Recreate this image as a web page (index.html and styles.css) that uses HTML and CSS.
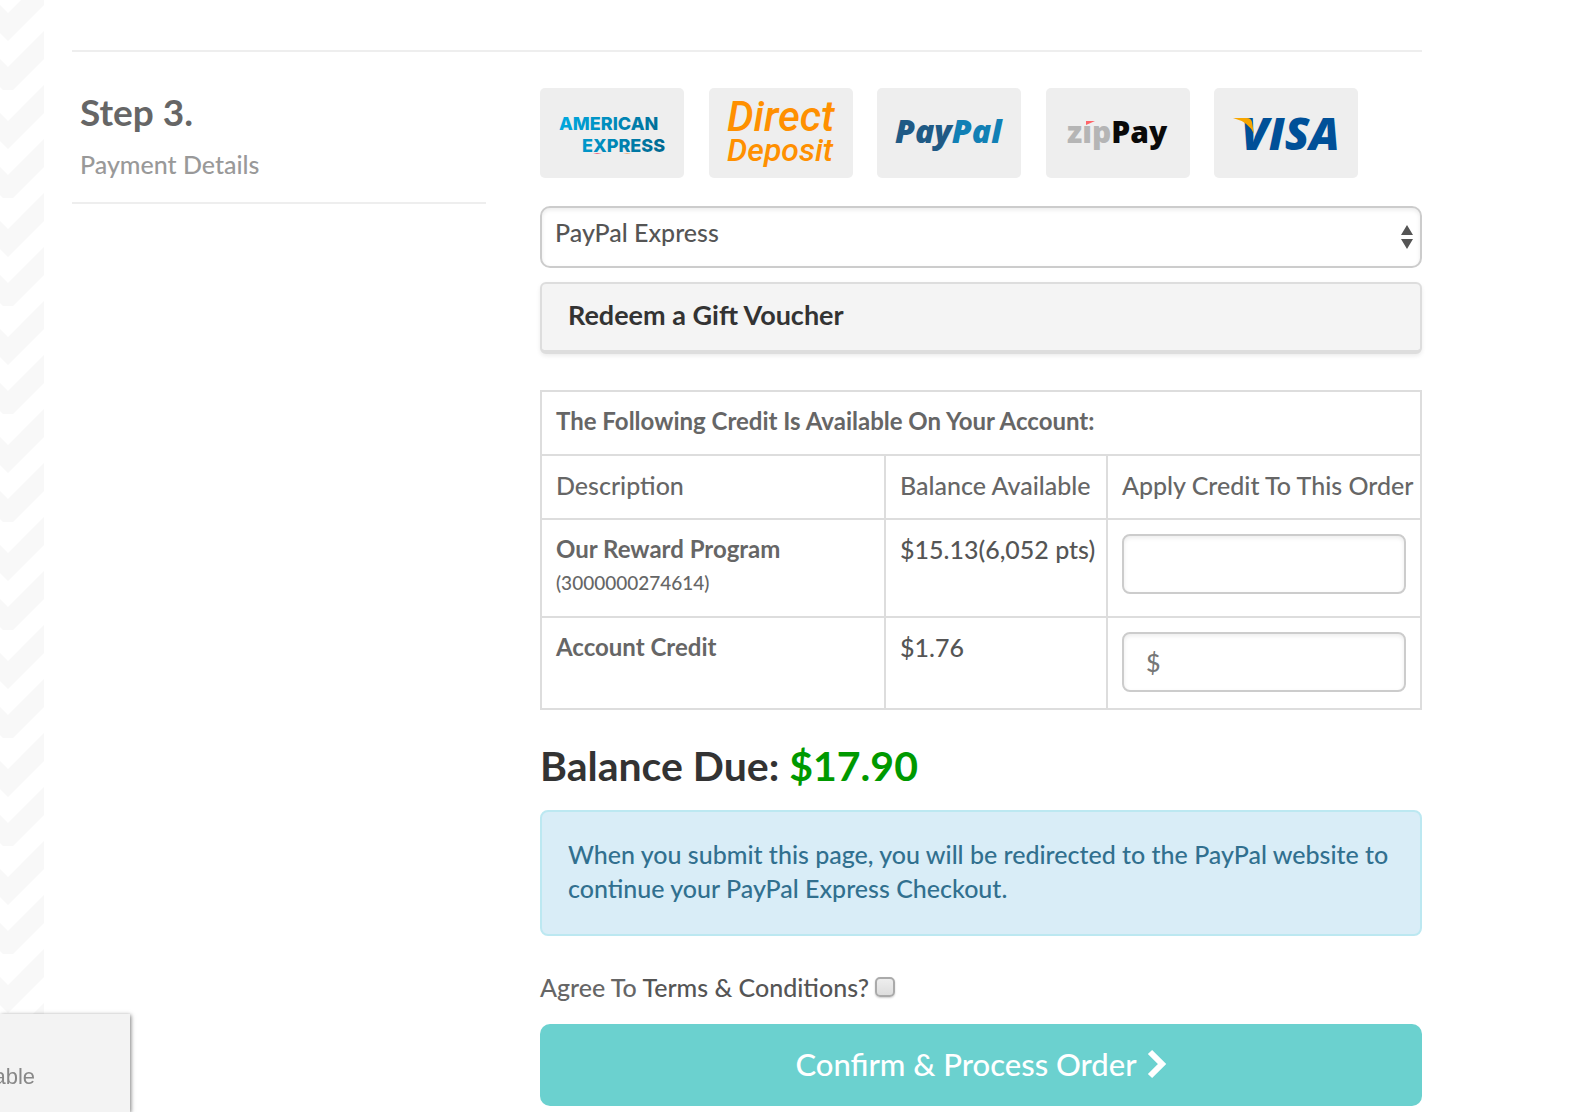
FILE: index.html
```html
<!DOCTYPE html>
<html lang="en">
<head>
	<meta charset="utf-8">
	<title>Checkout - Payment Details</title>
	<link rel="stylesheet" href="styles.css">
</head>
<body>
	<svg class="side-pattern" aria-hidden="true">
		<defs>
			<pattern id="chevrons" width="44" height="108" patternUnits="userSpaceOnUse">
				<path d="M0 5L8 13L44 -23V5L8 41L0 33Z"/>
				<path d="M0 59L8 67L44 31V59L13 90H3L0 87Z"/>
				<path d="M0 113L8 121L44 85V113L8 149L0 141Z"/>
			</pattern>
		</defs>
		<rect width="44" height="100%" fill="url(#chevrons)"/>
	</svg>

	<main class="checkout">
		<section class="step">
			<header class="step-header">
				<h2 class="step-title">Step 3.</h2>
				<p class="step-text">Payment Details</p>
			</header>

			<form class="payment" onsubmit="return false">
				<ul class="cards">
					<li class="card">
						<svg class="card-logo" viewBox="0 0 144 90">
							<defs>
								<linearGradient id="amex" gradientUnits="userSpaceOnUse" x1="20" y1="30" x2="125" y2="60">
									<stop offset="0" stop-color="#00a9e0"/>
									<stop offset="1" stop-color="#006890"/>
								</linearGradient>
							</defs>
							<text class="amex" x="19" y="42">AMERICAN</text>
							<text class="amex" x="42" y="64">EXPRESS</text>
							<path d="M53 65H62L57 66Z" fill="#e8607a"/>
							<path d="M83 65H92L87 66Z" fill="#f0b080"/>
						</svg>
					</li>
					<li class="card">
						<svg class="card-logo" viewBox="0 0 144 90">
							<text class="deposit deposit-big" x="18" y="43">Direct</text>
							<text class="deposit" x="18" y="73">Deposit</text>
						</svg>
					</li>
					<li class="card">
						<svg class="card-logo" viewBox="0 0 144 90">
							<text class="paypal" x="18" y="55">Pay<tspan class="paypal-light">Pal</tspan></text>
						</svg>
					</li>
					<li class="card">
						<svg class="card-logo" viewBox="0 0 144 90">
							<text class="zip" x="21" y="55">zıp<tspan class="zip-dark">Pay</tspan></text>
							<path d="M40 33H49L40 37Z" fill="#ff6468"/>
						</svg>
					</li>
					<li class="card">
						<svg class="card-logo" viewBox="0 0 144 90">
							<text class="visa" x="27" y="62">VISA</text>
							<path d="M19 30H33Q37 30 38 34L40 46Q35 34 19 30Z" fill="#f7a600"/>
						</svg>
					</li>
				</ul>

				<div class="select-wrap">
					<select class="method" aria-label="Payment method">
						<option>PayPal Express</option>
						<option>Direct Deposit</option>
						<option>zipPay</option>
					</select>
					<svg class="select-arrows" viewBox="0 0 12 24" aria-hidden="true">
						<path d="M0 10L6 0L12 10ZM0 14H12L6 24Z"/>
					</svg>
				</div>

				<button type="button" class="voucher">Redeem a Gift Voucher</button>

				<table class="credit">
					<colgroup>
						<col>
						<col class="col-balance">
						<col class="col-apply">
					</colgroup>
					<tr>
						<th colspan="3">The Following Credit Is Available On Your Account:</th>
					</tr>
					<tr>
						<td>Description</td>
						<td>Balance Available</td>
						<td>Apply Credit To This Order</td>
					</tr>
					<tr>
						<td><label for="reward"><b>Our Reward Program</b> <small>(3000000274614)</small></label></td>
						<td class="amount">$15.13(6,052 pts)</td>
						<td><input class="credit-input" type="text" id="reward"></td>
					</tr>
					<tr>
						<td><label for="account"><b>Account Credit</b></label></td>
						<td class="amount">$1.76</td>
						<td><input class="credit-input" type="text" id="account" placeholder="$"></td>
					</tr>
				</table>

				<h1 class="balance">Balance Due: <span class="balance-amount">$17.90</span></h1>

				<div class="alert">When you submit this page, you will be redirected to the PayPal website to continue your PayPal Express Checkout.</div>

				<div class="terms">
					<label for="terms">Agree To <a class="terms-link" href="#">Terms &amp; Conditions?</a></label>
					<input class="terms-check" type="checkbox" id="terms">
				</div>

				<button class="confirm">
					Confirm &amp; Process Order
					<svg class="confirm-icon" viewBox="0 0 20 30" aria-hidden="true">
						<path d="M3 3L15 15L3 27" fill="none" stroke="#fff" stroke-width="6"/>
					</svg>
				</button>
			</form>
		</section>
	</main>

	<div class="chat">able</div>
</body>
</html>
```
FILE: styles.css
```css
* {
	box-sizing: border-box;
}

body {
	display: flex;
	min-height: 100vh;
	margin: 0;
	font-family: Lato, sans-serif;
	font-size: 25px;
	font-weight: 500;
	line-height: 34px;
	color: #666;
	background-color: #fff;
}

.side-pattern {
	flex: none;
	align-self: stretch;
	width: 44px;
	height: auto;
	fill: #f8f8f8;
}

.checkout {
	flex: 1;
	padding: 50px 174px 0 28px;
}

.step {
	display: grid;
	grid-template-columns: 23fr 49fr;
	column-gap: 54px;
	align-items: start;
	padding-top: 36px;
	border-top: 2px solid #eee;
}

.step-header {
	padding: 0 8px 21px;
	border-bottom: 2px solid #eee;
}

.step-title {
	margin: 0 0 11px;
	font-size: 37px;
	line-height: 48px;
}

.step-text {
	margin: 0;
	color: #999;
}

/* payment logos */

.cards {
	display: flex;
	justify-content: space-between;
	max-width: 818px;
	margin: 0 0 28px;
	padding: 0;
	list-style: none;
}

.card {
	width: 144px;
	height: 90px;
	background-color: #eee;
	border-radius: 5px;
}

.card-logo {
	display: block;
	width: 100%;
	height: 100%;
}

.amex {
	font: 800 18px Inter, sans-serif;
	fill: url(#amex);
}

.deposit {
	font: italic 500 32px Roboto, sans-serif;
	fill: #ff9000;
}

.deposit-big {
	font-size: 42px;
}

.paypal {
	font: italic 800 32px "Open Sans", sans-serif;
	fill: #1f5a85;
}

.paypal-light {
	fill: #1180b5;
}

.zip {
	font: 800 30px "Open Sans", sans-serif;
	fill: #b5b5b5;
}

.zip-dark {
	fill: #0a0a0a;
}

.visa {
	font: italic 800 45px "Open Sans", sans-serif;
	fill: #005098;
}

/* form */

.select-wrap {
	position: relative;
	margin-bottom: 14px;
}

.method {
	display: block;
	width: 100%;
	height: 62px;
	padding: 0 40px 10px 13px;
	font: inherit;
	color: #555;
	background-color: #fff;
	border: 2px solid #ccc;
	border-radius: 10px;
	box-shadow: inset 0 2px 4px rgba(0, 0, 0, 0.08);
	appearance: none;
}

.select-arrows {
	position: absolute;
	top: 19px;
	right: 9px;
	width: 12px;
	height: 24px;
	fill: #555;
	pointer-events: none;
}

.voucher {
	display: block;
	width: 100%;
	margin-bottom: 36px;
	padding: 14px 26px 18px;
	font: inherit;
	font-size: 27px;
	font-weight: bold;
	text-align: left;
	color: #333;
	background-color: #f4f4f4;
	border: 2px solid #ddd;
	border-bottom-width: 4px;
	border-radius: 6px;
	box-shadow: 0 2px 4px rgba(0, 0, 0, 0.08);
	cursor: pointer;
}

.credit {
	width: 100%;
	margin-bottom: 29px;
	table-layout: fixed;
	border-collapse: collapse;
}

.col-balance {
	width: 222px;
}

.col-apply {
	width: 314px;
}

.credit th,
.credit td {
	padding: 12px 14px 16px;
	text-align: left;
	vertical-align: top;
	white-space: nowrap;
	border: 2px solid #ddd;
}

.credit th,
.credit b {
	font-size: 24px;
}

.credit b,
.credit small {
	display: block;
}

.credit small {
	font-size: 19px;
}

.amount {
	color: #555;
}

.credit-input {
	display: block;
	width: 100%;
	height: 60px;
	margin-top: 2px;
	padding: 0 22px;
	font: inherit;
	color: #555;
	background-color: #fff;
	border: 2px solid #ccc;
	border-radius: 8px;
	box-shadow: inset 0 2px 4px rgba(0, 0, 0, 0.08);
}

.credit-input::placeholder {
	color: #777;
}

.balance {
	margin: 0 0 17px;
	font-size: 41px;
	line-height: 54px;
	color: #333;
}

.balance-amount {
	color: #090;
}

.alert {
	margin-bottom: 34px;
	padding: 25px 26px 29px;
	color: #31708f;
	background-color: #d9edf7;
	border: 2px solid #bce8f1;
	border-radius: 8px;
}

.terms {
	display: flex;
	align-items: center;
	gap: 6px;
	margin-bottom: 20px;
}

.terms-link {
	color: #555;
	text-decoration: none;
}

.terms-check {
	width: 20px;
	height: 20px;
	margin: 0;
	background: linear-gradient(#eee, #ddd);
	border: 2px solid #aaa;
	border-radius: 5px;
	box-shadow: 0 1px 2px rgba(0, 0, 0, 0.2);
	appearance: none;
}

.terms-check:checked {
	background: #6bd1cf;
}

.confirm {
	display: flex;
	justify-content: center;
	align-items: center;
	gap: 10px;
	width: 100%;
	height: 82px;
	padding: 0 0 3px;
	font: inherit;
	font-size: 31px;
	color: #fff;
	background-color: #6bd1cf;
	border: none;
	border-radius: 10px;
	cursor: pointer;
}

.confirm-icon {
	width: 20px;
	height: 30px;
}

.chat {
	position: fixed;
	bottom: 0;
	left: 0;
	display: flex;
	justify-content: flex-end;
	width: 130px;
	height: 98px;
	padding: 46px 95px 0 0;
	overflow: hidden;
	font-family: "Liberation Sans", Arial, sans-serif;
	font-size: 22px;
	color: #888;
	background-color: #f3f3f3;
	box-shadow: 1px 1px 4px rgba(0, 0, 0, 0.5);
}
```
